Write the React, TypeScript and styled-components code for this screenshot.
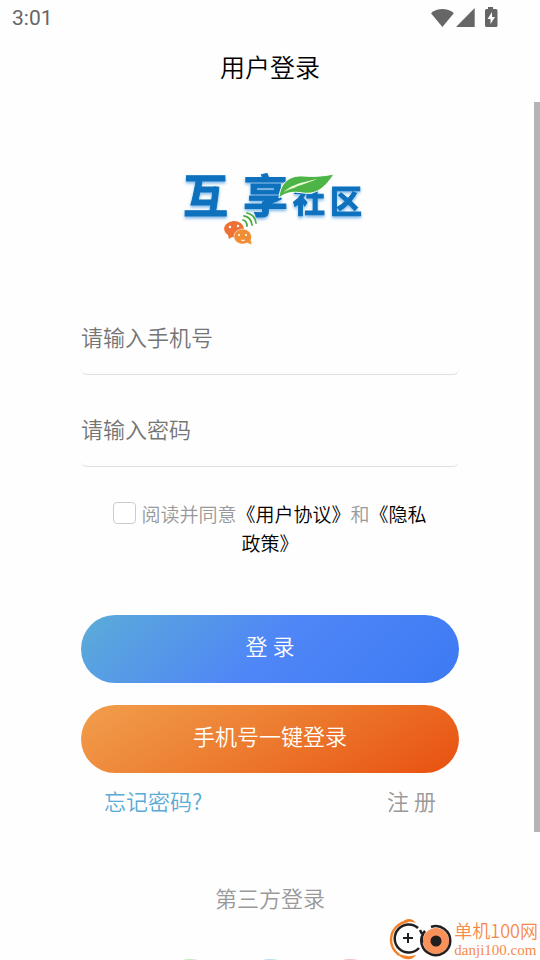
import React, { useState } from 'react';
import styled, { createGlobalStyle } from 'styled-components';

const sans = `Roboto, "Noto Sans CJK SC", sans-serif`;
const cjk = `"Noto Sans CJK SC", sans-serif`;

const GlobalStyle = createGlobalStyle`
  *, *::before, *::after { box-sizing: border-box; }
  body { margin: 0; background: #fefefe; font-family: ${cjk}; font-weight: 350; }
  button, input { font-family: inherit; font-weight: inherit; }
`;

const Screen = styled.div`
  position: relative;
  display: flex;
  flex-direction: column;
  height: 100vh;
  overflow: hidden;
  background: #fefefe;
`;

const StatusBar = styled.div`
  display: flex;
  flex: none;
  align-items: center;
  justify-content: space-between;
  height: 36px;
  padding: 0 40px 0 12px;
  color: #666;
  font-family: ${sans};
  font-size: 21px;
  font-weight: 400;
`;

const StatusIcons = styled.div`
  display: flex;
  align-items: center;
`;

const TitleBar = styled.header`
  display: flex;
  flex: none;
  justify-content: center;
  height: 66px;
`;

const Title = styled.h1`
  margin: 0;
  color: #000;
  font-size: 25px;
  font-weight: inherit;
  line-height: 60px;
`;

const Content = styled.main`
  flex: 1;
  min-height: 0;
  padding: 48px 15% 0;
  overflow-y: auto;
  scrollbar-width: none;
`;

const ScrollThumb = styled.div`
  position: absolute;
  top: 102px;
  right: 0;
  width: 6px;
  height: 76%;
  background: #b4b4b4;
`;

const LogoBox = styled.div`
  display: flex;
  justify-content: center;
  height: 151px;
`;

const Form = styled.form`
  display: flex;
  flex-direction: column;
`;

const Field = styled.input`
  width: 100%;
  height: 74px;
  margin-bottom: 18px;
  padding: 0 0 3px;
  border: 0 solid transparent;
  border-bottom: 1px solid #dde1e1;
  border-radius: 6px;
  outline: none;
  background: transparent;
  color: #333;
  font-size: 22px;

  &::placeholder {
    color: #757575;
    opacity: 1;
  }
`;

const Agreement = styled.div`
  margin: 14px 0 58px;
  padding: 0 24px;
  color: #999;
  font-size: 19px;
  line-height: 29px;
  text-align: center;
`;

const Tick = styled.input`
  appearance: none;
  width: 23px;
  height: 22px;
  margin: 0 5px 0 0;
  border: 1px solid #ccc;
  border-radius: 4px;
  background: #fff;
  vertical-align: -2px;

  &:checked {
    background: #4f87f7;
  }
`;

const TextLink = styled.a<{ $tone: string }>`
  color: ${(p) => p.$tone};
  text-decoration: none;
`;

const PillButton = styled.button<{ $fill: string }>`
  height: 68px;
  margin: 0 0 22px;
  padding: 0 0 8px;
  border: 0;
  border-radius: 34px;
  background: ${(p) => p.$fill};
  color: #fff;
  font-size: 22px;
  cursor: pointer;
`;

const LinkRow = styled.nav`
  display: flex;
  justify-content: space-between;
  margin-top: -11px;
  padding: 0 23px;
  font-size: 22px;
  line-height: 32px;
`;

const ThirdParty = styled.section`
  display: flex;
  flex-direction: column;
  align-items: center;
  margin-top: 65px;
`;

const ThirdPartyTitle = styled.h2`
  margin: 0;
  color: #999;
  font-size: 22px;
  font-weight: inherit;
  line-height: 32px;
`;

const Providers = styled.div`
  display: flex;
  gap: 24px;
  margin-top: 46px;
  padding-bottom: 24px;
`;

const Provider = styled.button<{ $tone: string }>`
  width: 56px;
  height: 56px;
  padding: 0;
  border: 2px solid ${(p) => p.$tone};
  border-radius: 50%;
  background: transparent;
`;

const Watermark = styled.div`
  position: absolute;
  right: 2px;
  bottom: 0;
  display: flex;
  gap: 2px;
  height: 42px;
  color: #f78a4b;
`;

const WatermarkText = styled.div`
  display: flex;
  flex-direction: column;
`;

const SiteName = styled.span`
  font-size: 18px;
  line-height: 24px;
  white-space: nowrap;
`;

const SiteUrl = styled.span`
  font-family: "Liberation Serif", serif;
  font-size: 15px;
  line-height: 16px;
`;

function BrandLogo() {
  return (
    <svg width="188" height="98" viewBox="0 -16 188 98" role="img" aria-label="互享社区">
      <defs>
        <filter id="halo" x="-10%" y="-20%" width="120%" height="150%">
          <feDropShadow dx="0" dy="2" stdDeviation="1.5" floodColor="#4a9be0" floodOpacity="0.7" />
        </filter>
      </defs>
      <g
        fill="#0871bd"
        stroke="#0871bd"
        strokeWidth="1"
        fontFamily='"Noto Sans CJK SC", sans-serif'
        fontWeight="700"
        filter="url(#halo)"
      >
        <text x="7" y="47" fontSize="45">互</text>
        <text x="67" y="47" fontSize="45">享</text>
        <text x="117" y="46" fontSize="32">社</text>
        <text x="154" y="47" fontSize="32">区</text>
      </g>
      <path d="M103 32C104 18 112 9 127 10C138 11 149 10 158 8C150 20 142 29 127 27C116 25 109 27 103 32Z" fill="#4db447" stroke="#fff" strokeWidth="1" />
      <path d="M107 27C113 20 122 17 141 13C130 18 123 19 118 22C113 23 109 25 107 27Z" fill="#eafad0" />
      <g fill="none" stroke="#4fac45" strokeWidth="1.8" strokeLinecap="round">
        <path d="M67 54Q71 55 71 60" />
        <path d="M68 50Q75 51 76 59" />
        <path d="M71 47Q79 49 80 57" />
      </g>
      <path d="M58 55C65 55 69 60 68 66C66 71 60 73 56 71L53 73L52 69C45 64 48 56 58 55Z" fill="#ed7134" />
      <path d="M66 63C73 63 77 68 75 74L76 79L71 77C65 80 58 76 58 71C58 66 61 64 66 63Z" fill="#f18e35" stroke="#fff" strokeWidth="0.6" />
      <g fill="#fff">
        <circle cx="54" cy="61" r="1.2" /><circle cx="62" cy="60" r="1.2" />
        <circle cx="63" cy="69" r="1.1" /><circle cx="70" cy="69" r="1.1" />
      </g>
      <path d="M65 74Q67 75 69 74" fill="none" stroke="#fff" strokeWidth="1" />
    </svg>
  );
}

function SignalIcons() {
  return (
    <svg width="70" height="24" viewBox="0 0 70 24" fill="#666" aria-hidden="true">
      <path d="M1 7.2C7.4 1.7 17.4 1.7 23.8 7.2L12.4 21Z" />
      <path d="M44.7 2V21H26Z" />
      <path fillRule="evenodd" d="M58 1h5v2h3a1.5 1.5 0 0 1 1.5 1.5v15A1.5 1.5 0 0 1 66 21H56.5a1.5 1.5 0 0 1-1.5-1.5v-15A1.5 1.5 0 0 1 56.5 3H58ZM62 6l-4.5 7H60.5v5L65 11H62Z" />
    </svg>
  );
}

function SiteMark() {
  return (
    <svg width="64" height="42" viewBox="0 0 64 42" fill="none" aria-hidden="true">
      <path d="M20 3C10 5 3 12 3 22C3 28 6 33 11 37" stroke="#f5812a" strokeWidth="2.5" />
      <path d="M13 6Q18-1 25 2L28 5Q20 2 13 6Z" fill="#f5812a" />
      <path d="M9 35Q18 40 28 37Q25 42 18 41Q12 40 9 35Z" fill="#f5812a" />
      <path d="M30 10A14 14 0 1 0 31 30" stroke="#231f20" strokeWidth="2.5" />
      <path d="M20 15v10M15 20h10" stroke="#231f20" strokeWidth="2" />
      <circle cx="48" cy="23" r="13" fill="#f9915a" />
      <path d="M43 9A14.500 14.500 0 1 1 37 13Q33 17 34 25M32 12L34 16" stroke="#231f20" strokeWidth="2.5" />
      <circle cx="48" cy="23" r="5.5" fill="#231f20" />
    </svg>
  );
}

export default function App() {
  const [agreed, setAgreed] = useState(false);

  return (
    <Screen>
      <GlobalStyle />
      <StatusBar>
        <span>3:01</span>
        <StatusIcons><SignalIcons /></StatusIcons>
      </StatusBar>
      <TitleBar><Title>用户登录</Title></TitleBar>
      <Content>
        <LogoBox><BrandLogo /></LogoBox>
        <Form onSubmit={(e) => e.preventDefault()}>
          <Field type="tel" placeholder="请输入手机号" aria-label="请输入手机号" />
          <Field type="password" placeholder="请输入密码" aria-label="请输入密码" />
          <Agreement>
            <Tick id="agree" type="checkbox" checked={agreed} onChange={(e) => setAgreed(e.target.checked)} />
            <label htmlFor="agree">阅读并同意</label>
            <TextLink $tone="#000" href="#terms">《用户协议》</TextLink>和<TextLink $tone="#000" href="#privacy">《隐私政策》</TextLink>
          </Agreement>
          <PillButton type="submit" $fill="linear-gradient(135deg, #5cacd8, #4f86f7 50%, #3c7af3)">登 录</PillButton>
          <PillButton type="button" $fill="linear-gradient(150deg, #f19f4d, #ec7a2e 50%, #e95010)">手机号一键登录</PillButton>
        </Form>
        <LinkRow>
          <TextLink $tone="#5aaad8" href="#forgot">忘记密码?</TextLink>
          <TextLink $tone="#999" href="#register">注 册</TextLink>
        </LinkRow>
        <ThirdParty>
          <ThirdPartyTitle>第三方登录</ThirdPartyTitle>
          <Providers>
            <Provider $tone="#c4e8c0" aria-label="微信" />
            <Provider $tone="#b4e2ee" aria-label="QQ" />
            <Provider $tone="#f3c0c0" aria-label="微博" />
          </Providers>
        </ThirdParty>
      </Content>
      <ScrollThumb />
      <Watermark>
        <SiteMark />
        <WatermarkText>
          <SiteName>单机100网</SiteName>
          <SiteUrl>danji100.com</SiteUrl>
        </WatermarkText>
      </Watermark>
    </Screen>
  );
}
